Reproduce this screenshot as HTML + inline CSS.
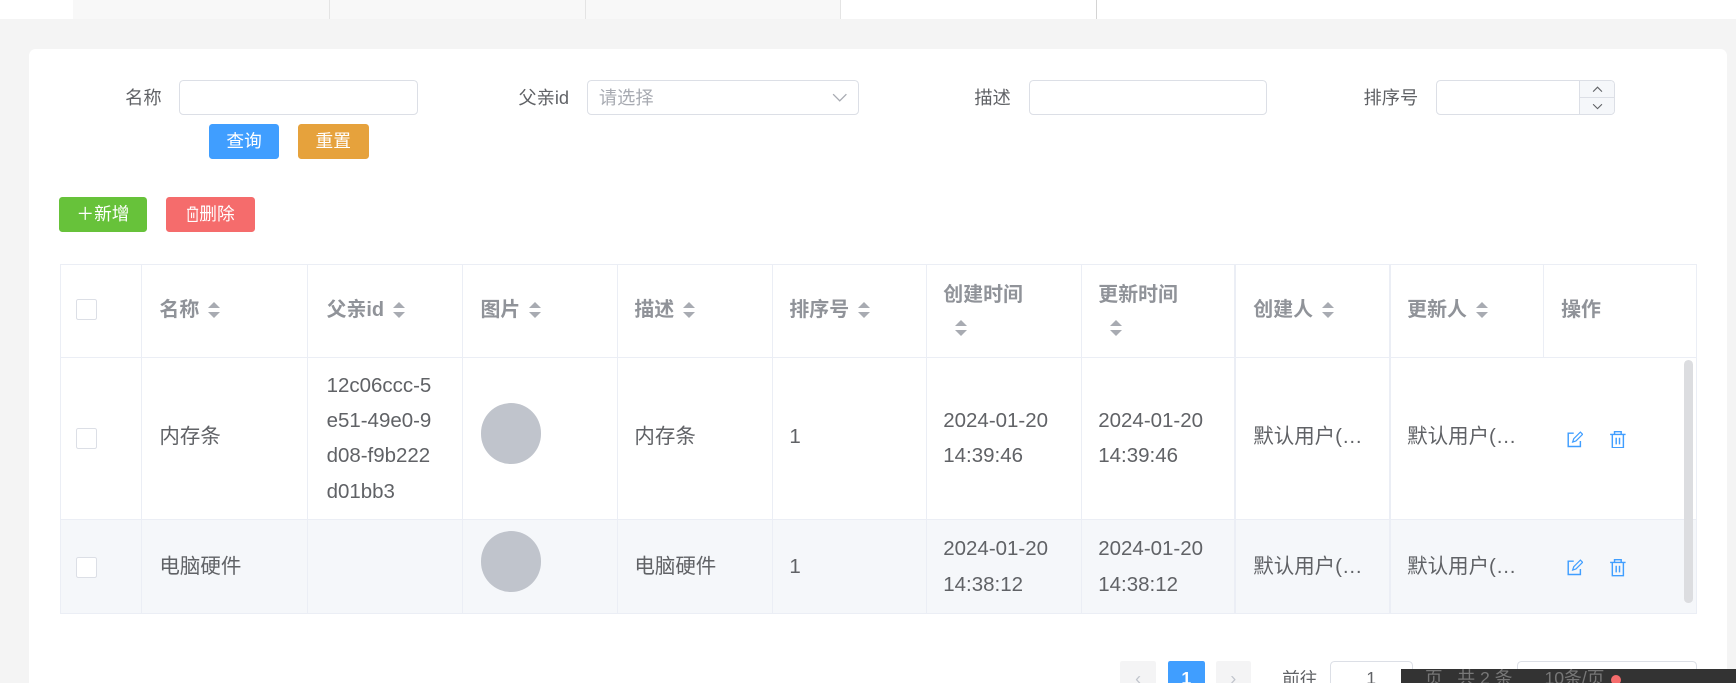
<!DOCTYPE html>
<html><head><meta charset="utf-8"><style>
*{box-sizing:border-box;margin:0;padding:0}
html,body{width:1736px;height:683px;overflow:hidden;background:#f4f4f4}
#w{zoom:1.107143;width:1568px;height:617px;position:relative;font-family:"Liberation Sans","Noto Sans CJK SC",sans-serif;font-size:16px;color:#606266}
.a{position:absolute}
.top{left:0;top:0;width:1568px;height:17px;background:#fff}
.card{left:26px;top:44px;width:1534px;height:600px;background:#fff;border-radius:6px}
.lbl{font-size:16.5px;color:#606266;line-height:32px;text-align:right}
.inp{height:32px;border:1px solid #dcdfe6;border-radius:4px;background:#fff}
.btn{height:32px;border-radius:3px;color:#fff;font-size:16px;line-height:32px;text-align:center}
.th{font-weight:bold;color:#909399;font-size:18px;line-height:24px}
.sort{display:inline-block;width:12px;height:18px;vertical-align:middle;margin-left:8px;position:relative}
.sort:before{content:"";position:absolute;left:0;top:1px;border:6px solid transparent;border-bottom:6px solid #a8abb2;border-top:0}
.sort:after{content:"";position:absolute;left:0;top:10px;border:6px solid transparent;border-top:6px solid #a8abb2;border-bottom:0}
.cb{width:19px;height:19px;border:1px solid #dcdfe6;border-radius:2px;background:#fff}
.vl{width:1px;background:#ebeef5}
.hl{height:1px;background:#ebeef5}
.t{font-size:18.5px;color:#606266;line-height:24px}
.av{width:55px;height:55px;border-radius:50%;background:#c0c4cc}
</style></head><body><div id="w">
<div class="a top"></div>
<div class="a" style="left:66px;top:0;width:694px;height:17px;background:#f8f8f8"></div>
<div class="a" style="left:297px;top:0;width:1px;height:17px;background:#e4e4e4"></div>
<div class="a" style="left:528px;top:0;width:1px;height:17px;background:#e4e4e4"></div>
<div class="a" style="left:759px;top:0;width:1px;height:17px;background:#e4e4e4"></div>
<div class="a" style="left:990px;top:0;width:1px;height:17px;background:#d4d4d4"></div>
<div class="a card"></div>

<div class="a lbl" style="left:80px;top:72px;width:66px">名称</div>
<div class="a inp" style="left:162px;top:72px;width:216px"></div>
<div class="a lbl" style="left:430px;top:72px;width:84px">父亲id</div>
<div class="a inp" style="left:530px;top:72px;width:246px;color:#a8abb2;line-height:30px;padding-left:10px;font-size:16.5px">请选择
<svg class="a" style="right:10px;top:10px" width="14" height="10" viewBox="0 0 14 10"><path d="M1 2l6 6 6-6" fill="none" stroke="#a8abb2" stroke-width="1.2"/></svg></div>
<div class="a lbl" style="left:840px;top:72px;width:73px">描述</div>
<div class="a inp" style="left:929px;top:72px;width:215px"></div>
<div class="a lbl" style="left:1200px;top:72px;width:81px">排序号</div>
<div class="a inp" style="left:1297px;top:72px;width:162px;overflow:hidden">
<div class="a" style="left:128px;top:0;width:33px;height:30px;background:#f5f7fa;border-left:1px solid #dcdfe6"><div class="a hl" style="left:0;top:15px;width:33px;background:#dcdfe6"></div>
<svg class="a" style="left:11px;top:4px" width="10" height="8"><path d="M1 6l4-4 4 4" fill="none" stroke="#606266"/></svg>
<svg class="a" style="left:11px;top:19px" width="10" height="8"><path d="M1 2l4 4 4-4" fill="none" stroke="#606266"/></svg></div></div>

<div class="a btn" style="left:189px;top:112px;width:63px;background:#409eff">查询</div>
<div class="a btn" style="left:269px;top:112px;width:64px;background:#e6a23c">重置</div>
<div class="a btn" style="left:53px;top:178px;width:80px;background:#67c23a">＋新增</div>
<div class="a btn" style="left:150px;top:178px;width:80px;background:#f56c6c"><svg width="12" height="15" viewBox="0 0 12 15" style="vertical-align:-2px"><path d="M1 3h10M4 3V1h4v2M2 3v11h8V3M5 6v5M7 6v5" fill="none" stroke="#fff"/></svg>删除</div>

<!-- table -->
<div class="a" style="left:54px;top:238px;width:1479px;height:317px;border:1px solid #ebeef5"></div>
<div class="a" style="left:55px;top:469px;width:1477px;height:85px;background:#f5f7fa"></div>
<div class="a hl" style="left:54px;top:322px;width:1479px"></div>
<div class="a hl" style="left:54px;top:469px;width:1479px"></div>
<div class="a vl" style="left:127px;top:238px;height:317px"></div>
<div class="a vl" style="left:277px;top:238px;height:317px"></div>
<div class="a vl" style="left:417px;top:238px;height:317px"></div>
<div class="a vl" style="left:557px;top:238px;height:317px"></div>
<div class="a vl" style="left:697px;top:238px;height:317px"></div>
<div class="a vl" style="left:836px;top:238px;height:317px"></div>
<div class="a vl" style="left:976px;top:238px;height:317px"></div>
<div class="a vl" style="left:1115px;top:238px;height:317px"></div>
<div class="a vl" style="left:1255px;top:238px;height:317px"></div>
<div class="a vl" style="left:1394px;top:238px;height:85px"></div>
<div class="a" style="left:1521px;top:325px;width:8px;height:220px;background:#dcdde0;border-radius:4px"></div>

<div class="a cb" style="left:69px;top:270px"></div>
<div class="a th" style="left:144px;top:268px">名称<span class="sort"></span></div>
<div class="a th" style="left:295px;top:268px">父亲id<span class="sort"></span></div>
<div class="a th" style="left:434px;top:268px">图片<span class="sort"></span></div>
<div class="a th" style="left:573px;top:268px">描述<span class="sort"></span></div>
<div class="a th" style="left:713px;top:268px">排序号<span class="sort"></span></div>
<div class="a th" style="left:852px;top:252px;line-height:30px">创建时间<br><span class="sort" style="margin-left:11px"></span></div>
<div class="a th" style="left:992px;top:252px;line-height:30px">更新时间<br><span class="sort" style="margin-left:11px"></span></div>
<div class="a th" style="left:1132px;top:268px">创建人<span class="sort"></span></div>
<div class="a th" style="left:1271px;top:268px">更新人<span class="sort"></span></div>
<div class="a th" style="left:1410px;top:268px">操作</div>

<div class="a cb" style="left:69px;top:387px"></div>
<div class="a t" style="left:144px;top:383px">内存条</div>
<div class="a t" style="left:295px;top:332px;line-height:32px">12c06ccc-5<br>e51-49e0-9<br>d08-f9b222<br>d01bb3</div>
<div class="a av" style="left:434px;top:364px"></div>
<div class="a t" style="left:573px;top:383px">内存条</div>
<div class="a t" style="left:713px;top:383px">1</div>
<div class="a t" style="left:852px;top:364px;line-height:32px">2024-01-20<br>14:39:46</div>
<div class="a t" style="left:992px;top:364px;line-height:32px">2024-01-20<br>14:39:46</div>
<div class="a t" style="left:1132px;top:383px">默认用户(…</div>
<div class="a t" style="left:1271px;top:383px">默认用户(…</div>

<div class="a cb" style="left:69px;top:503px"></div>
<div class="a t" style="left:144px;top:500px">电脑硬件</div>
<div class="a av" style="left:434px;top:480px"></div>
<div class="a t" style="left:573px;top:500px">电脑硬件</div>
<div class="a t" style="left:713px;top:500px">1</div>
<div class="a t" style="left:852px;top:480px;line-height:32px">2024-01-20<br>14:38:12</div>
<div class="a t" style="left:992px;top:480px;line-height:32px">2024-01-20<br>14:38:12</div>
<div class="a t" style="left:1132px;top:500px">默认用户(…</div>
<div class="a t" style="left:1271px;top:500px">默认用户(…</div>

<svg class="a" style="left:1414px;top:389px" width="16" height="16" viewBox="0 0 16 16"><path d="M7 2H2v12h11V9" fill="none" stroke="#409eff" stroke-width="1.3"/><path d="M6 10l1-3 6-6 2 2-6 6z" fill="none" stroke="#409eff" stroke-width="1.1"/></svg>
<svg class="a" style="left:1453px;top:388px" width="16" height="17" viewBox="0 0 16 17"><path d="M1 4h14M5 4V1.5h6V4M3 4v12h10V4M6.5 7v6M9.5 7v6" fill="none" stroke="#409eff" stroke-width="1.3"/></svg>
<svg class="a" style="left:1414px;top:505px" width="16" height="16" viewBox="0 0 16 16"><path d="M7 2H2v12h11V9" fill="none" stroke="#409eff" stroke-width="1.3"/><path d="M6 10l1-3 6-6 2 2-6 6z" fill="none" stroke="#409eff" stroke-width="1.1"/></svg>
<svg class="a" style="left:1453px;top:504px" width="16" height="17" viewBox="0 0 16 17"><path d="M1 4h14M5 4V1.5h6V4M3 4v12h10V4M6.5 7v6M9.5 7v6" fill="none" stroke="#409eff" stroke-width="1.3"/></svg>

<!-- pagination -->
<div class="a" style="left:1012px;top:597px;width:32px;height:32px;background:#f4f4f5;border-radius:2px;color:#c0c4cc;text-align:center;line-height:32px">‹</div>
<div class="a" style="left:1055px;top:597px;width:33px;height:32px;background:#409eff;border-radius:2px;color:#fff;text-align:center;line-height:32px;font-weight:bold">1</div>
<div class="a" style="left:1098px;top:597px;width:32px;height:32px;background:#f4f4f5;border-radius:2px;color:#c0c4cc;text-align:center;line-height:32px">›</div>
<div class="a" style="left:1158px;top:601px">前往</div>
<div class="a inp" style="left:1201px;top:597px;width:75px;text-align:center;line-height:30px">1</div>
<div class="a" style="left:1370px;top:597px;width:163px;height:32px;border:1px solid #dcdfe6;border-radius:4px"></div>
<div class="a" style="left:1265px;top:604px;width:303px;height:13px;background:#333;overflow:hidden;color:#777;font-size:16px"><span style="position:absolute;left:22px;top:-4px">页&nbsp;&nbsp;&nbsp;共 2 条</span><span style="position:absolute;left:130px;top:-4px">10条/页</span></div>
<div class="a" style="left:1455px;top:610px;width:9px;height:9px;border-radius:50%;background:#f56c6c"></div>
</div></body></html>
